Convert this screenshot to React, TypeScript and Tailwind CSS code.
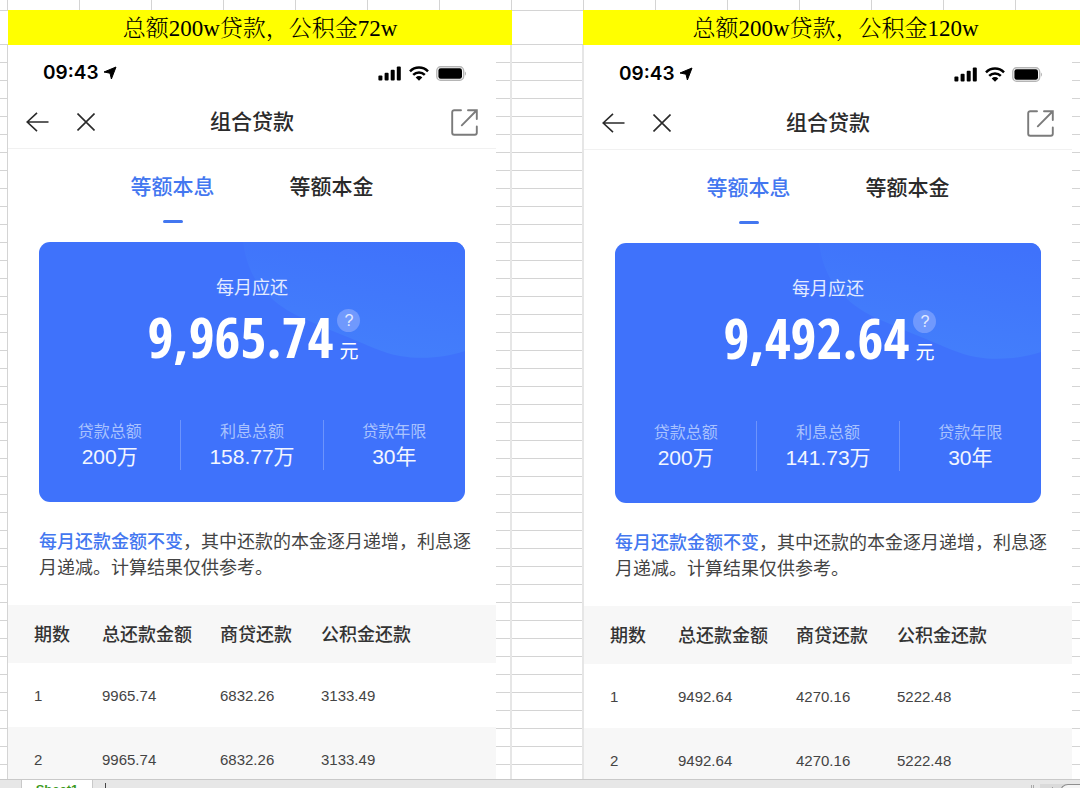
interface Loan {
  caption: string;
  monthly: string;
  interest: string;
  rows: string[][];
}

const loans: Loan[] = [
  {
    caption: '总额200w贷款，公积金72w',
    monthly: '9,965.74',
    interest: '158.77万',
    rows: [
      ['1', '9965.74', '6832.26', '3133.49'],
      ['2', '9965.74', '6832.26', '3133.49'],
    ],
  },
  {
    caption: '总额200w贷款，公积金120w',
    monthly: '9,492.64',
    interest: '141.73万',
    rows: [
      ['1', '9492.64', '4270.16', '5222.48'],
      ['2', '9492.64', '4270.16', '5222.48'],
    ],
  },
];

function StatusBar() {
  return (
    <div className="flex h-14 items-center justify-between pl-[35px] pr-[29px] text-black">
      <div className="flex items-center gap-1">
        <span className="font-[Inter,sans-serif] text-[19px] font-semibold">09:43</span>
        <svg width="14" height="14" viewBox="0 0 14 14" fill="currentColor" stroke="currentColor" strokeLinejoin="round" aria-hidden="true">
          <path d="M13 1 8.4 13 7 7.2 1 6z" />
        </svg>
      </div>
      <div className="flex items-center gap-[7px]">
        <svg width="24" height="15" viewBox="0 0 24 15" fill="currentColor" aria-hidden="true">
          <rect x="0.4" y="9.6" width="4" height="5" rx="1" />
          <rect x="6.6" y="6.8" width="4" height="7.8" rx="1" />
          <rect x="12.7" y="3.8" width="4" height="10.8" rx="1" />
          <rect x="18.8" y="0.6" width="4" height="14" rx="1" />
        </svg>
        <svg width="20" height="15" viewBox="0 0 20 15" fill="none" stroke="currentColor" strokeWidth="2.5" aria-hidden="true">
          <path d="M1 5.3a12.8 12.8 0 0 1 18 0" />
          <path d="M4.2 8.9a8.2 8.2 0 0 1 11.6 0" />
          <path d="M6.7 11.4a4.6 4.6 0 0 1 6.6 0L10 14.8z" fill="currentColor" stroke="none" />
        </svg>
        <svg width="31" height="15" viewBox="0 0 31 15" aria-hidden="true">
          <rect x="0.8" y="0.8" width="26.8" height="13.4" rx="3.8" fill="#fff" stroke="#b5b5b5" strokeWidth="1.4" />
          <rect x="2.4" y="2.2" width="23.6" height="10.6" rx="2.2" fill="#000" />
          <path d="M28.8 5.2c1.6.7 1.6 3.9 0 4.6z" fill="#b5b5b5" />
        </svg>
      </div>
    </div>
  );
}

function NavBar() {
  return (
    <header className="grid grid-cols-[1fr_auto_1fr] items-center border-b border-[#f1f1f1] pb-[5px] text-[#2a2a2a]">
      <div className="flex items-center gap-7 pl-[18px]">
        <button type="button" aria-label="返回">
          <svg width="23" height="20" viewBox="0 0 23 20" fill="none" stroke="currentColor" strokeWidth="1.6" aria-hidden="true">
            <path d="M22.5 10H1M11 .8 1.2 10l9.8 9.2" />
          </svg>
        </button>
        <button type="button" aria-label="关闭">
          <svg width="18" height="18" viewBox="0 0 18 18" fill="none" stroke="currentColor" strokeWidth="1.6" aria-hidden="true">
            <path d="M.5.5l17 17M17.5.5l-17 17" />
          </svg>
        </button>
      </div>
      <h1 className="text-[21px] font-medium leading-[42px]">组合贷款</h1>
      <div className="flex justify-end pr-[18px]">
        <button type="button" aria-label="分享">
          <svg width="27" height="27" viewBox="0 0 27 27" fill="none" stroke="#7b7b7b" strokeWidth="1.9" strokeLinecap="round" aria-hidden="true">
            <path d="M10 1.2H3.2a2 2 0 0 0-2 2v20.6a2 2 0 0 0 2 2h20.6a2 2 0 0 0 2-2v-6.3" />
            <path d="M17 1.2h8.8V10M25.5 1.5 10.8 16.3" />
          </svg>
        </button>
      </div>
    </header>
  );
}

function Stat({ label, value }: { label: string; value: string }) {
  return (
    <div className="flex-1 border-r border-[#6d94fc] text-center last:border-r-0">
      <dt className="text-base leading-6 text-[#a9c2fe]">{label}</dt>
      <dd className="text-[21px] leading-[26px] text-[#f2f6ff]">{value}</dd>
    </div>
  );
}

function SummaryCard({ loan }: { loan: Loan }) {
  return (
    <section className="relative mx-[31px] mt-[19px] overflow-hidden rounded-[11px] bg-[#3f72fb] pb-8 pt-[34px] text-white">
      <svg className="absolute right-0 top-0" width="222" height="116" viewBox="0 0 222 116" aria-hidden="true">
        <defs>
          <linearGradient id="glow" x1="0.75" y1="0" x2="0.45" y2="0.9">
            <stop offset="0" stopColor="#3f72fb" />
            <stop offset="1" stopColor="#437efb" />
          </linearGradient>
        </defs>
        <path d="M0 0C3 23 12 42 27 55C39 66 50 72 64 78C80 85 94 91 107 96C124 103 140 111 157 114C180 118 204 115 222 109V0z" fill="url(#glow)" />
      </svg>
      <div className="relative">
        <p className="text-center text-lg leading-6 text-[#e3ebff]">每月应还</p>
        <div className="flex h-[72px] items-center justify-center gap-1 pl-1">
          <span className="font-['Open_Sans_Condensed','Roboto_Condensed',sans-serif] text-[56px] font-bold leading-[72px]">{loan.monthly}</span>
          <span className="flex flex-col items-center gap-2">
            <button type="button" aria-label="说明" className="size-[23px] rounded-full bg-[#7099fd] text-base leading-[23px] text-[#e3ebff]">
              ?
            </button>
            <span className="text-[19px] leading-6">元</span>
          </span>
        </div>
        <dl className="mt-12 flex">
          <Stat label="贷款总额" value="200万" />
          <Stat label="利息总额" value={loan.interest} />
          <Stat label="贷款年限" value="30年" />
        </dl>
      </div>
    </section>
  );
}

function Schedule({ rows }: { rows: string[][] }) {
  return (
    <table className="mt-6 w-full table-fixed text-left">
      <thead>
        <tr className="h-[58px] bg-[#f7f7f7] text-lg text-[#333]">
          <th className="w-[94px] pl-[26px] pt-0.5 font-medium">期数</th>
          <th className="w-[118px] pt-0.5 font-medium">总还款金额</th>
          <th className="w-[101px] pt-0.5 font-medium">商贷还款</th>
          <th className="pt-0.5 font-medium">公积金还款</th>
        </tr>
      </thead>
      <tbody>
        {rows.map((row) => (
          <tr key={row[0]} className="h-16 text-[15px] text-[#444] even:bg-[#f7f7f7]">
            {row.map((cell, i) => (
              <td key={i} className="pt-0.5 first:pl-[26px]">
                {cell}
              </td>
            ))}
          </tr>
        ))}
      </tbody>
    </table>
  );
}

function Phone({ loan }: { loan: Loan }) {
  return (
    <article className="min-w-0 bg-white last-of-type:pt-px">
      <StatusBar />
      <NavBar />
      <nav className="flex justify-center gap-[75px] pt-[23px] text-[21px] font-medium leading-[30px]">
        <button type="button" className="flex flex-col items-center gap-[18px] text-[#4377f0]">
          等额本息
          <span className="h-[3px] w-5 rounded-full bg-[#4377f0]" />
        </button>
        <button type="button" className="self-start text-[#2a2a2a]">
          等额本金
        </button>
      </nav>
      <SummaryCard loan={loan} />
      <p className="ml-[31px] mr-6 mt-[27px] text-lg leading-[26px] text-[#444]">
        <span className="font-medium text-[#4377f0]">每月还款金额不变</span>，其中还款的本金逐月递增，利息逐月递减。计算结果仅供参考。
      </p>
      <Schedule rows={loan.rows} />
    </article>
  );
}

function SheetFooter() {
  return (
    <footer className="flex h-[9px] shrink-0 overflow-hidden border-t border-[#c9c9c9] bg-[#e7e7e7]">
      <button
        type="button"
        className="ml-[21px] h-5 w-[72px] border-x border-[#c9c9c9] bg-white text-[13px] font-bold leading-5 text-[#3d9a1c]"
      >
        Sheet1
      </button>
      <span className="ml-3 mt-[3px] h-6 w-px bg-[#444]" />
      <span className="ml-auto mt-[5px] h-6 w-[3px] border-x border-[#aaa]" />
      <div className="ml-1.5 mt-1 flex h-6 w-10 bg-[#dadada]">
        <svg className="ml-2 mt-[3px]" width="6" height="8" viewBox="0 0 6 8" fill="#777" aria-hidden="true">
          <path d="M5 0v8L0 4z" />
        </svg>
        <span className="ml-1.5 flex-1 rounded-tl-lg border-l border-t border-[#8f8f8f] bg-[#f4f4f4]" />
      </div>
    </footer>
  );
}

export default function App() {
  return (
    <div className="flex h-screen flex-col overflow-hidden bg-white font-['Liberation_Sans','Noto_Sans_CJK_SC',sans-serif]">
      <div className="h-2.5 shrink-0 bg-[linear-gradient(to_right,transparent_71px,#d4d4d4_71px)] bg-[length:72px_100%] bg-[position:8px_0]" />
      <div className="grid shrink-0 grid-cols-[8px_504fr_71px_497fr] text-center font-['Liberation_Serif','Noto_Serif_CJK_SC',serif] text-[23px] leading-[33px] text-black">
        <div className="border-y border-[#d4d4d4]" />
        <h2 className="truncate bg-[#ffff00] pt-0.5 font-light">{loans[0].caption}</h2>
        <div className="border-y border-[#d4d4d4]" />
        <h2 className="truncate bg-[#ffff00] pl-2 pt-0.5 font-light">{loans[1].caption}</h2>
      </div>
      <main className="grid min-h-0 flex-1 grid-cols-[8px_488fr_16px_72px_488fr_8px] overflow-hidden bg-[linear-gradient(to_bottom,transparent_17px,#d4d4d4_17px)] bg-[length:100%_18px]">
        <div className="border-r border-[#d4d4d4]" />
        <Phone loan={loans[0]} />
        <div className="border-r-2 border-[#e6e6e6]" />
        <div className="border-r-2 border-[#e6e6e6]" />
        <Phone loan={loans[1]} />
      </main>
      <SheetFooter />
    </div>
  );
}
